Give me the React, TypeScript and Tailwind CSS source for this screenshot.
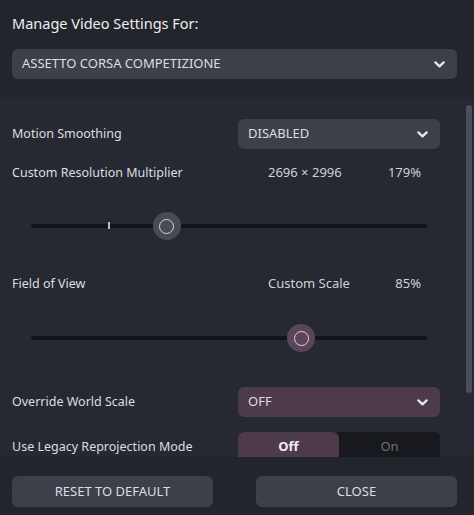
import type { ReactNode } from 'react';

function Chevron() {
  return (
    <svg width="11" height="7" viewBox="0 0 11 7" aria-hidden>
      <polyline
        points="1.4,1.4 5.5,5.4 9.6,1.4"
        fill="none"
        stroke="#e4e5e7"
        strokeWidth="2.3"
        strokeLinecap="round"
        strokeLinejoin="round"
      />
    </svg>
  );
}

function Select({ value, tone = 'gray', className = '' }: { value: string; tone?: 'gray' | 'purple'; className?: string }) {
  return (
    <div
      className={`flex h-[30px] items-center justify-between rounded-md pl-[10px] pr-[12px] text-[13px] text-[#dcdee0] ${
        tone === 'purple' ? 'bg-[#4d3a4b]' : 'bg-[#3d4049]'
      } ${className}`}
    >
      <span>{value}</span>
      <Chevron />
    </div>
  );
}

function Row({ label, children }: { label: string; children: ReactNode }) {
  return (
    <div className="flex items-center justify-between">
      <span className="text-[12.5px] text-[#dcdee0]">{label}</span>
      {children}
    </div>
  );
}

function ValueRow({ label, mid, value }: { label: string; mid: string; value: string }) {
  return (
    <div className="grid h-5 grid-cols-[256px_1fr_auto] items-center pr-[19px] text-[12.5px] text-[#dcdee0]">
      <span>{label}</span>
      <span className="text-[13px] text-[#cfd1d4]">{mid}</span>
      <span className="text-[13px] text-[#cfd1d4]">{value}</span>
    </div>
  );
}

function Slider({ pct, tick, purple = false }: { pct: number; tick?: number; purple?: boolean }) {
  return (
    <div className="flex h-[56px] items-center pl-[19px] pr-[13px]">
      <div className="relative h-[4px] w-full rounded-full bg-[#121419]">
        {tick !== undefined && (
          <div
            className="absolute top-[-2px] h-[7px] w-[2px] bg-[#b9bbbf]"
            style={{ left: `${tick}%` }}
          />
        )}
        <div
          className={`absolute top-1/2 flex h-[28px] w-[28px] -translate-x-1/2 -translate-y-1/2 items-center justify-center rounded-full ${
            purple ? 'bg-[#5b4659]' : 'bg-[#474b55]'
          }`}
          style={{ left: `${pct}%` }}
        >
          <div
            className={`h-[15px] w-[15px] rounded-full border-[1.5px] ${
              purple ? 'border-[#e2d3e0]' : 'border-[#d4d6d9]'
            }`}
          />
        </div>
      </div>
    </div>
  );
}

export default function App() {
  return (
    <div
      className="flex h-[515px] w-[474px] flex-col overflow-hidden bg-[#23252d]"
      style={{ fontFamily: '"Noto Sans", "Open Sans", sans-serif' }}
    >
      <div className="px-3 pb-[19px] pt-[13px]">
        <h1 className="h-5 text-[14.5px] leading-5 text-[#eceef0]">Manage Video Settings For:</h1>
        <Select value="ASSETTO CORSA COMPETIZIONE" className="mt-4 w-[445px]" />
      </div>

      <div className="flex h-[359px] bg-[#262931]">
        <div className="w-[452px] overflow-hidden px-3 pt-[21px]">
          <Row label="Motion Smoothing">
            <Select value="DISABLED" className="w-[202px]" />
          </Row>
          <div className="mt-[14px]">
            <ValueRow label="Custom Resolution Multiplier" mid="2696 × 2996" value="179%" />
          </div>
          <div className="mt-[15px]">
            <Slider pct={34.3} tick={19.5} />
          </div>
          <div className="mt-5">
            <ValueRow label="Field of View" mid="Custom Scale" value="85%" />
          </div>
          <div className="mt-4">
            <Slider pct={68.2} purple />
          </div>
          <div className="mt-[21px]">
            <Row label="Override World Scale">
              <Select value="OFF" tone="purple" className="w-[202px]" />
            </Row>
          </div>
          <div className="mt-[15px]">
            <Row label="Use Legacy Reprojection Mode">
              <div className="flex h-[30px] w-[202px] rounded-md bg-[#17191e] text-[13px]">
                <div className="flex w-[101px] items-center justify-center rounded-md bg-[#4d3a4b] font-bold text-[#eeeef0]">
                  Off
                </div>
                <div className="flex flex-1 items-center justify-center text-[#6d7077]">On</div>
              </div>
            </Row>
          </div>
        </div>
        <div className="ml-[14px] mt-[7px] h-[288px] w-[6px] rounded-full bg-[#4b4f58]" />
      </div>

      <div className="flex gap-[43px] px-3 pt-[19px]">
        <button
          type="button"
          className="h-[31px] w-[201px] rounded-md bg-[#3d4049] text-[13px] text-[#dcdee0]"
        >
          RESET TO DEFAULT
        </button>
        <button
          type="button"
          className="h-[31px] w-[201px] rounded-md bg-[#3d4049] text-[13px] text-[#dcdee0]"
        >
          CLOSE
        </button>
      </div>
    </div>
  );
}
